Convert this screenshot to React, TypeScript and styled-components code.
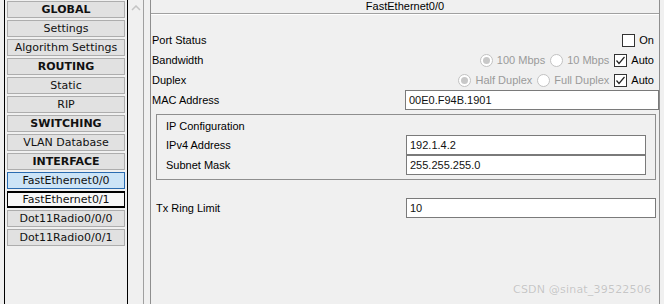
import styled, { createGlobalStyle } from "styled-components";

type MenuKind = "header" | "item" | "selected" | "focused";

const menu: { label: string; kind: MenuKind }[] = [
  { label: "GLOBAL", kind: "header" },
  { label: "Settings", kind: "item" },
  { label: "Algorithm Settings", kind: "item" },
  { label: "ROUTING", kind: "header" },
  { label: "Static", kind: "item" },
  { label: "RIP", kind: "item" },
  { label: "SWITCHING", kind: "header" },
  { label: "VLAN Database", kind: "item" },
  { label: "INTERFACE", kind: "header" },
  { label: "FastEthernet0/0", kind: "selected" },
  { label: "FastEthernet0/1", kind: "focused" },
  { label: "Dot11Radio0/0/0", kind: "item" },
  { label: "Dot11Radio0/0/1", kind: "item" },
];

const GlobalStyle = createGlobalStyle`
  html, body {
    margin: 0;
    padding: 0;
    background: #f0f0f0;
  }
  body {
    width: 664px;
    height: 304px;
    overflow: hidden;
  }
`;

const Radio = ({ checked }: { checked?: boolean }) => (
  <RadioCircle>{checked && <RadioDot />}</RadioCircle>
);

const Check = ({ checked }: { checked?: boolean }) => (
  <CheckBox>
    {checked && (
      <svg width="11" height="11" viewBox="0 0 11 11">
        <polyline points="1.5,5.5 4,8.5 9.5,2" fill="none" stroke="#222" strokeWidth="1.2" />
      </svg>
    )}
  </CheckBox>
);

const App = () => {
  return (
    <>
      <GlobalStyle />
      <Screen>
        <LeftPanel>
          {menu.map((m) => (
            <MenuButton key={m.label} $kind={m.kind}>
              {m.label}
            </MenuButton>
          ))}
        </LeftPanel>
        <ScrollColumn>
          <svg width="10" height="6" viewBox="0 0 10 6">
            <polyline points="1,5 5,1 9,5" fill="none" stroke="#c4c4c4" strokeWidth="1.5" />
          </svg>
        </ScrollColumn>
        <RightPanel>
          <Title>FastEthernet0/0</Title>
          <Content>
            <Row>
              <Label>Port Status</Label>
              <Controls>
                <Check />
                <OptText>On</OptText>
              </Controls>
            </Row>
            <Row>
              <Label>Bandwidth</Label>
              <Controls>
                <Radio checked />
                <OptText $disabled>100 Mbps</OptText>
                <Radio />
                <OptText $disabled>10 Mbps</OptText>
                <Check checked />
                <OptText>Auto</OptText>
              </Controls>
            </Row>
            <Row>
              <Label>Duplex</Label>
              <Controls>
                <Radio checked />
                <OptText $disabled>Half Duplex</OptText>
                <Radio />
                <OptText $disabled>Full Duplex</OptText>
                <Check checked />
                <OptText>Auto</OptText>
              </Controls>
            </Row>
            <Row>
              <Label>MAC Address</Label>
              <Field $width={254}>00E0.F94B.1901</Field>
            </Row>
            <GroupBox>
              <GroupTitle>IP Configuration</GroupTitle>
              <Row>
                <Label $width={240}>IPv4 Address</Label>
                <Field $width={240}>192.1.4.2</Field>
              </Row>
              <Row>
                <Label $width={240}>Subnet Mask</Label>
                <Field $width={240}>255.255.255.0</Field>
              </Row>
            </GroupBox>
            <TxRow>
              <Label $width={250}>Tx Ring Limit</Label>
              <Field $width={250}>10</Field>
            </TxRow>
          </Content>
        </RightPanel>
        <Watermark>CSDN @sinat_39522506</Watermark>
      </Screen>
    </>
  );
};

const Screen = styled.div`
  position: relative;
  display: flex;
  height: 304px;
  padding-left: 4px;
  background: #f0f0f0;
`;

const LeftPanel = styled.div`
  width: 122px;
  border-left: 1px solid #000;
  border-right: 1px solid #000;
  padding: 1px 2px 0;
  box-sizing: border-box;
  display: flex;
  flex-direction: column;
  gap: 2px;
  flex: 0 0 124px;
`;

const MenuButton = styled.div<{ $kind: MenuKind }>`
  height: 17px;
  box-sizing: border-box;
  display: flex;
  align-items: center;
  justify-content: center;
  font-family: "DejaVu Sans", Verdana, sans-serif;
  font-size: 11px;
  font-weight: ${(p) => (p.$kind === "header" ? "bold" : "normal")};
  color: #111;
  background: ${(p) =>
    p.$kind === "selected" ? "#cce4f7" : p.$kind === "focused" ? "#f7f7f7" : "#e1e1e1"};
  border: 1px solid
    ${(p) => (p.$kind === "selected" ? "#2a6bb0" : p.$kind === "focused" ? "#000" : "#adadad")};
  border-top-width: ${(p) => (p.$kind === "focused" ? "2px" : "1px")};
  border-bottom-width: ${(p) => (p.$kind === "focused" ? "2px" : "1px")};
  white-space: nowrap;
`;

const ScrollColumn = styled.div`
  flex: 0 0 16px;
  border-right: 1px solid #a0a0a0;
  display: flex;
  justify-content: center;
  padding-top: 5px;
  box-sizing: border-box;
  margin-right: 6px;
  svg {
    display: block;
  }
`;

const RightPanel = styled.div`
  flex: 0 0 510px;
  box-sizing: border-box;
  border-left: 1px solid #8e8e8e;
  border-right: 1px solid #8e8e8e;
  font-family: "Liberation Sans", Arial, sans-serif;
  font-size: 11px;
  color: #000;
`;

const Title = styled.div`
  height: 13px;
  line-height: 12px;
  text-align: center;
  font-size: 11px;
  border-bottom: 1px solid #a0a0a0;
  box-shadow: 0 1px 0 #fff;
`;

const Content = styled.div`
  padding: 16px 0 0 1px;
  display: flex;
  flex-direction: column;
`;

const Row = styled.div`
  height: 20px;
  display: flex;
  align-items: center;
`;

const Label = styled.div<{ $width?: number }>`
  width: ${(p) => (p.$width ? `${p.$width}px` : "253px")};
  flex: 0 0 auto;
  white-space: nowrap;
`;

const Controls = styled.div`
  flex: 1;
  display: flex;
  align-items: center;
  justify-content: flex-end;
  padding-right: 5px;
`;

const OptText = styled.span<{ $disabled?: boolean }>`
  color: ${(p) => (p.$disabled ? "#9a9a9a" : "#000")};
  margin: 0 3px 0 4px;
  &:last-child {
    margin-right: 0;
  }
`;

const RadioCircle = styled.span`
  width: 13px;
  height: 13px;
  box-sizing: border-box;
  border: 1px solid #c2c2c2;
  border-radius: 50%;
  background: #fff;
  display: flex;
  align-items: center;
  justify-content: center;
  margin-left: 2px;
`;

const RadioDot = styled.span`
  width: 7px;
  height: 7px;
  border-radius: 50%;
  background: #c8c8c8;
`;

const CheckBox = styled.span`
  width: 13px;
  height: 13px;
  box-sizing: border-box;
  border: 1px solid #333;
  background: #fff;
  display: flex;
  align-items: center;
  justify-content: center;
  margin-left: 2px;
  svg {
    display: block;
  }
`;

const Field = styled.div<{ $width: number }>`
  width: ${(p) => p.$width}px;
  height: 20px;
  box-sizing: border-box;
  border: 1px solid #7a7a7a;
  background: #fff;
  padding-left: 3px;
  display: flex;
  align-items: center;
  color: #111;
  white-space: nowrap;
`;

const GroupBox = styled.div`
  margin: 4px 3px 0 4px;
  border: 1px solid #8e8e8e;
  padding: 3px 9px 4px 9px;
  display: flex;
  flex-direction: column;
`;

const GroupTitle = styled.div`
  height: 17px;
  line-height: 17px;
`;

const TxRow = styled(Row)`
  margin: 18px 3px 0 4px;
`;

const Watermark = styled.div`
  position: absolute;
  left: 513px;
  top: 283px;
  font-family: "DejaVu Sans", sans-serif;
  font-size: 11px;
  color: #c6c6c6;
  text-shadow: 0 0 1px #fff;
  letter-spacing: 0.2px;
`;

export default App;
